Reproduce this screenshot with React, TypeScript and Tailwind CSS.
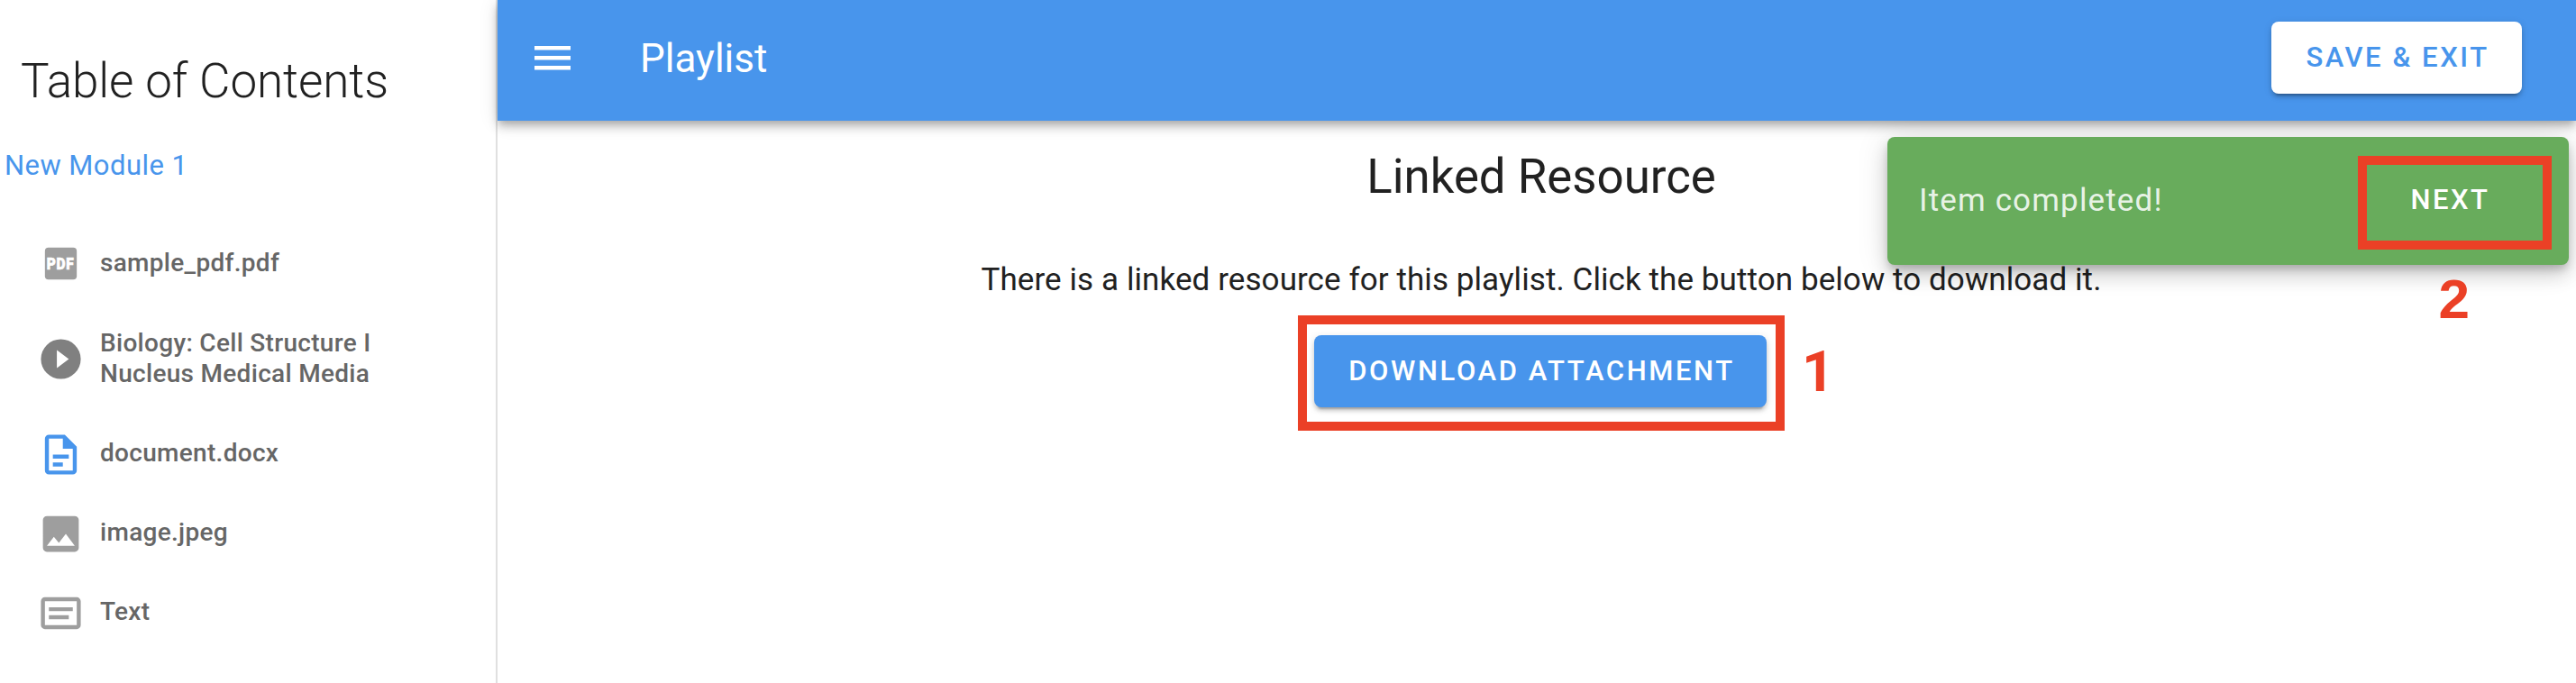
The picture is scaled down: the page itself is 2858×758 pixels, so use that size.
import React from "react";

const items = [
  { label: "sample_pdf.pdf", icon: "pdf", row: "h-[88px]", text: "" },
  { label: "Biology: Cell Structure I Nucleus Medical Media", icon: "play", row: "h-[124px]", text: "" },
  { label: "document.docx", icon: "doc", row: "h-[88px]", text: "pb-[3px]" },
  { label: "image.jpeg", icon: "image", row: "h-[88px]", text: "pb-[3px]" },
  { label: "Text", icon: "text", row: "h-[88px]", text: "pb-[3px]" },
];

function ItemIcon({ kind }: { kind: string }) {
  const color =
    kind === "doc" ? "text-[#4895ec]" : kind === "play" ? "text-[#808080]" : "text-[#9e9e9e]";
  return (
    <svg viewBox="0 0 24 24" className={`size-[53px] shrink-0 ${color}`} fill="currentColor">
      {kind === "pdf" && (
        <>
          <rect x="4" y="4" width="16" height="16" rx="1.8" />
          <text
            x="4.9"
            y="14.9"
            textLength="13.9"
            lengthAdjust="spacingAndGlyphs"
            className="fill-white stroke-white stroke-[0.3px] font-['Roboto',sans-serif] text-[8.3px] font-black tracking-[0.4px]"
          >
            PDF
          </text>
        </>
      )}
      {kind === "play" && (
        <path d="M12 2a10 10 0 1 0 0 20 10 10 0 0 0 0-20zm-2 14.5v-9l6 4.5z" />
      )}
      {kind === "doc" && (
        <path d="M6 2a2 2 0 0 0-2 2v16c0 1.1.9 2 2 2h12a2 2 0 0 0 2-2V8l-6-6H6zm0 2h7v5h5v11H6V4zm2 8v2h8v-2H8zm0 4v2h5v-2H8z" />
      )}
      {kind === "image" && (
        <path d="M21 19V5a2 2 0 0 0-2-2H5a2 2 0 0 0-2 2v14c0 1.1.9 2 2 2h14a2 2 0 0 0 2-2zM8.5 13.5l2.5 3.01L14.5 12l4.5 6H5l3.5-4.5z" />
      )}
      {kind === "text" && (
        <path d="M20 20H4a2 2 0 0 1-2-2V6c0-1.1.9-2 2-2h16a2 2 0 0 1 2 2v12a2 2 0 0 1-2 2zM4 6v12h16V6H4zm2 3h12v2H6V9zm0 4h10v2H6v-2z" />
      )}
    </svg>
  );
}

export default function App() {
  return (
    <div className="flex h-[758px] w-[2858px] overflow-hidden bg-white font-['Roboto',sans-serif] text-[#212121]">
      <aside className="flex w-[552px] shrink-0 flex-col border-r-2 border-[#e0e0e0]">
        <h1 className="mt-[57px] pl-[23px] text-[53px] leading-[66px] font-light tracking-[-0.1px] whitespace-nowrap">
          Table of Contents
        </h1>
        <h2 className="mt-[39px] pl-[5px] text-[31px] leading-[44px] tracking-[0.45px] text-[#4895ec]">
          New Module 1
        </h2>
        <ul className="mt-[42px]">
          {items.map((item) => (
            <li key={item.label} className={`flex items-center pl-[40.5px] ${item.row}`}>
              <ItemIcon kind={item.icon} />
              <span
                className={`ml-[17.5px] w-[340px] text-[28px] leading-[34px] font-medium tracking-[0.3px] text-[#666] ${item.text}`}
              >
                {item.label}
              </span>
            </li>
          ))}
        </ul>
      </aside>

      <div className="flex min-w-0 grow flex-col">
        <header className="z-10 flex h-[134px] shrink-0 items-center bg-[#4895ec] pr-[60px] pb-[6px] pl-[41px] text-white shadow-[0_4px_8px_-2px_rgba(0,0,0,0.2),0_8px_10px_0_rgba(0,0,0,0.14),0_2px_20px_0_rgba(0,0,0,0.12)]">
          <svg viewBox="0 0 40 28" className="h-[28px] w-[40px]" fill="currentColor">
            <path d="M0 1h40v4.4H0zM0 12h40v4.4H0zM0 23h40v4.4H0z" />
          </svg>
          <span className="ml-[77px] pt-[2px] text-[44px] leading-[56px]">Playlist</span>
          <button className="ml-auto h-[80px] w-[278px] rounded-[8px] bg-white pl-[2px] text-[31px] font-medium tracking-[2.55px] text-[#4895ec] shadow-[0_6px_2px_-4px_rgba(0,0,0,0.2),0_4px_4px_0_rgba(0,0,0,0.14),0_2px_10px_0_rgba(0,0,0,0.12)]">
            SAVE &amp; EXIT
          </button>
        </header>

        <main className="relative flex grow flex-col items-center pl-[10px]">
          <h2 className="mt-[30px] text-[52.8px] leading-[64px]">Linked Resource</h2>
          <p className="mt-[61px] text-[35px] leading-[44px] tracking-[0.08px]">
            There is a linked resource for this playlist. Click the button below to download it.
          </p>
          <div className="relative mt-[17px] border-10 border-[#eb4026] pt-[12px] pr-[10px] pb-[16px] pl-[8px]">
            <button className="block h-[80px] w-[502px] rounded-[8px] bg-[#4895ec] pl-[3px] text-[31px] font-medium tracking-[2.6px] text-white shadow-[0_6px_2px_-4px_rgba(0,0,0,0.2),0_4px_4px_0_rgba(0,0,0,0.14),0_2px_10px_0_rgba(0,0,0,0.12)]">
              DOWNLOAD ATTACHMENT
            </button>
            <span className="absolute top-[22px] left-[549px] text-[63px] leading-[62px] font-bold text-[#eb4026]">
              1
            </span>
          </div>

          <div className="absolute top-[18px] right-[8px] flex h-[142px] w-[756px] items-center rounded-[8px] bg-[#68ac5c] pr-[19px] pl-[35px] shadow-[0_6px_10px_-2px_rgba(0,0,0,0.2),0_12px_20px_0_rgba(0,0,0,0.14),0_2px_36px_0_rgba(0,0,0,0.12)]">
            <span className="text-[35px] tracking-[1.15px] text-white/87">Item completed!</span>
            <button className="mt-[4px] ml-auto h-[104px] w-[215px] border-10 border-[#eb4026] pr-[10px] pb-[6px] text-[31px] font-medium tracking-[2.5px] text-white">
              NEXT
            </button>
            <span className="absolute top-[149px] right-[110px] font-['Liberation_Sans',sans-serif] text-[62px] leading-[62px] font-bold text-[#eb4026]">
              2
            </span>
          </div>
        </main>
      </div>
    </div>
  );
}
